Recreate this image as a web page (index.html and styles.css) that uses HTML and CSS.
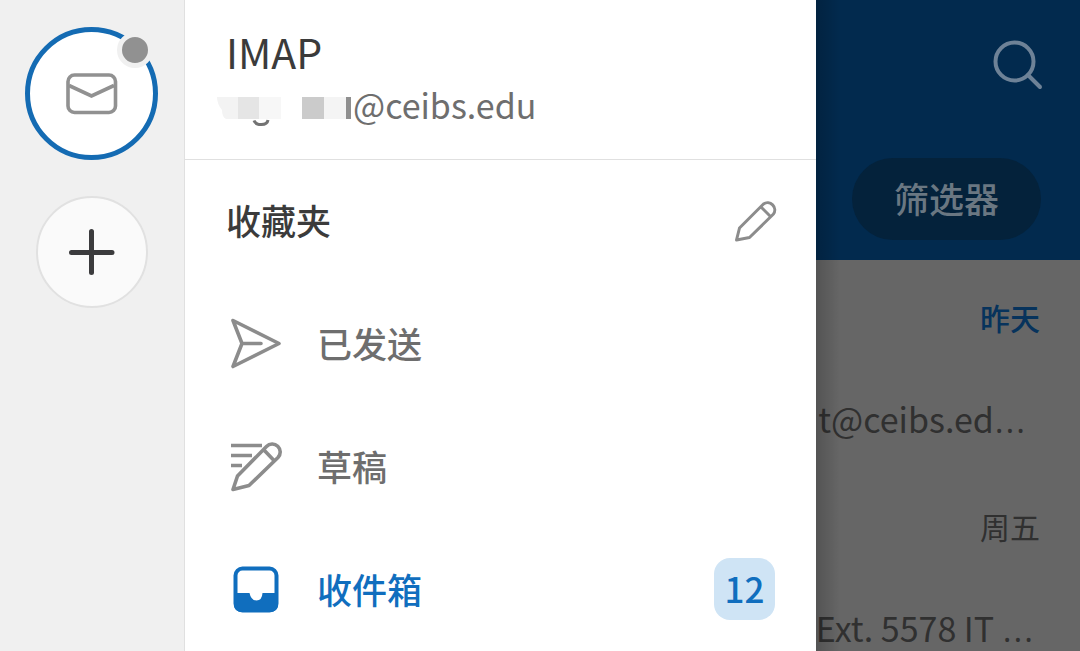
FILE: index.html
```html
<!DOCTYPE html>
<html lang="zh-CN">
<head>
<meta charset="utf-8">
<title>收件箱</title>
<meta name="viewport" content="width=device-width, initial-scale=1">
<link rel="stylesheet" href="styles.css">
</head>
<body class="app">
  <aside class="drawer">
    <nav class="rail" aria-label="帐户">
      <button class="account" type="button" aria-label="IMAP">
        <svg class="account-icon" viewBox="0 0 52 42" fill="none" stroke="#919191" stroke-width="3.6" stroke-linejoin="round">
          <rect x="2" y="2" width="47.500" height="37.500" rx="6.500"/>
          <path d="M3 12.500 25.500 23 48 12.500" stroke-linejoin="miter"/>
        </svg>
        <span class="account-badge"></span>
      </button>
      <button class="add" type="button" aria-label="添加帐户">
        <svg class="add-icon" viewBox="0 0 46 46" stroke="#3b3b3d" stroke-width="5" stroke-linecap="round"><path d="M22.500 2.500v41M2.500 23.500h40.500"/></svg>
      </button>
    </nav>
    <section class="panel">
      <header class="identity">
        <h1 class="identity-name">IMAP</h1>
        <p class="identity-mail">
          <svg class="mask" viewBox="0 0 136 44" aria-hidden="true">
            <g transform="translate(0 14)">
              <path d="M0 0h21v22H9Q5 20 5 13Q0 7 0 0Z" fill="#f3f3f3"/>
              <path d="M21 0h21v22H21z" fill="#e5e5e5"/>
              <path d="M42 0h22v22H42z" fill="#f7f7f7"/>
              <path d="M85 0h22v22H85z" fill="#cbcbcb"/>
              <path d="M107 0h22v22h-22z" fill="#f4f4f4"/>
              <path d="M129 0h5v22h-5z" fill="#8f8f8f"/>
              <path d="M37 23.500C39 29 50 29 51 23" fill="none" stroke="#737373" stroke-width="3"/>
            </g>
          </svg><span>@ceibs.edu</span>
        </p>
      </header>
      <div class="favorites">
        <h2 class="favorites-title">收藏夹</h2>
        <button class="edit" type="button" aria-label="编辑收藏夹">
          <svg class="edit-icon" viewBox="0 0 44 44" fill="none" stroke="#8c8c8c" stroke-width="3" stroke-linejoin="round">
            <path d="M3.500 42 6.500 30 30.500 6a7.200 7.200 0 0 1 10 10L16.500 39.500ZM28 9 38 19"/>
          </svg>
        </button>
      </div>
      <nav class="folders" aria-label="收藏夹">
        <a class="folder" href="#sent">
          <svg class="folder-icon" viewBox="0 0 54 54" fill="none" stroke="#8c8c8c" stroke-width="3.600" stroke-linejoin="round" stroke-linecap="round">
            <path d="M4 4.500 50 27.500 4 50.500 13 27.500ZM13 27.500H32"/>
          </svg>
          <span class="folder-name">已发送</span>
        </a>
        <a class="folder" href="#drafts">
          <svg class="folder-icon" viewBox="0 0 54 54" fill="none" stroke="#8c8c8c" stroke-width="3.600" stroke-linejoin="round">
            <path d="M4 50.500 8.500 37 37.500 7.500a7.600 7.600 0 0 1 11.500 11L20 46.500ZM34.500 10.500 45 21.500"/>
            <path d="M2 6.500h31M2 16.500h21M2 26.500h11"/>
          </svg>
          <span class="folder-name">草稿</span>
        </a>
        <a class="folder folder-active" href="#inbox" aria-current="page">
          <svg class="folder-icon" viewBox="0 0 54 54">
            <rect x="6.500" y="6.500" width="41" height="42" rx="7" fill="none" stroke="#106ebe" stroke-width="4"/>
            <path d="M5 31H20.500Q22 38.500 27.500 38.500T33.500 31H49V42Q49 50 41 50H13Q5 50 5 42Z" fill="#106ebe"/>
          </svg>
          <span class="folder-name">收件箱</span>
          <span class="count">12</span>
        </a>
      </nav>
    </section>
  </aside>
  <main class="inbox">
    <header class="toolbar">
      <button class="search" type="button" aria-label="搜索">
        <svg class="search-icon" viewBox="0 0 52 52" fill="none" stroke="#6e8297" stroke-width="4" stroke-linecap="round">
          <circle cx="22.500" cy="22.500" r="19"/><path d="M36 36 48 48"/>
        </svg>
      </button>
      <button class="filter" type="button">筛选器</button>
    </header>
    <article class="message">
      <time class="date date-unread">昨天</time>
      <p class="excerpt">t@ceibs.ed<span class="dots">…</span></p>
    </article>
    <article class="message">
      <time class="date">周五</time>
      <p class="excerpt excerpt-wide">Ext. 5578 IT <span class="dots">…</span></p>
    </article>
  </main>
</body>
</html>
```
FILE: styles.css
```css
* {
  box-sizing: border-box;
}

.app {
  display: flex;
  min-height: 100vh;
  margin: 0;
  overflow: hidden;
  background: #666;
  font-family: "Noto Sans CJK SC", "Noto Sans", sans-serif;
}

button {
  padding: 0;
  border: 0;
  background: none;
  font: inherit;
}

svg {
  display: block;
  flex: none;
}

h1,
h2,
p {
  margin: 0;
}

.drawer {
  display: flex;
  flex: 0 0 816px;
  background: #fff;
}

.rail {
  display: flex;
  flex: 0 0 185px;
  flex-direction: column;
  align-items: center;
  gap: 36px;
  padding: 27px 1px 0 0;
  border-right: 1px solid #e0e0e0;
  background: #f0f0f0;
}

.account {
  position: relative;
  display: grid;
  place-items: center;
  width: 133px;
  height: 133px;
  border: 5px solid #146bb3;
  border-radius: 50%;
  background: #fff;
}

.account-icon {
  width: 52px;
  height: 42px;
}

.account-badge {
  position: absolute;
  top: 0;
  right: 0;
  width: 36px;
  height: 36px;
  border: 5px solid #f0f0f0;
  border-radius: 50%;
  background: #919191;
}

.add {
  display: grid;
  place-items: center;
  width: 112px;
  height: 112px;
  border: 2px solid #e1e1e1;
  border-radius: 50%;
  background: #fafafa;
}

.add-icon {
  width: 46px;
  height: 46px;
}

.panel {
  flex: 1;
}

.identity {
  height: 160px;
  padding: 24px 32px 0;
  border-bottom: 1px solid #e0e0e0;
}

.identity-name {
  padding-left: 9px;
  color: #3b3b3b;
  font-size: 41px;
  font-weight: 400;
  line-height: 54px;
}

.identity-mail {
  display: flex;
  align-items: center;
  color: #6e6e6e;
  font-size: 34px;
  line-height: 54px;
}

.mask {
  width: 136px;
  height: 44px;
}

.favorites {
  display: flex;
  align-items: center;
  justify-content: space-between;
  height: 122px;
  padding: 0 39px 2px 41px;
}

.favorites-title {
  color: #3b3b3b;
  font-size: 35px;
  font-weight: 500;
  line-height: 52px;
}

.edit-icon {
  width: 44px;
  height: 44px;
}

.folder {
  display: flex;
  align-items: center;
  height: 123px;
  padding: 0 41px 2px 44px;
  color: #6e6e6e;
  font-size: 35px;
  font-weight: 500;
  line-height: 52px;
  text-decoration: none;
}

.folder-icon {
  width: 54px;
  height: 54px;
  margin-right: 34px;
}

.folder-active {
  color: #106ebe;
}

.count {
  width: 61px;
  height: 62px;
  margin-left: auto;
  border-radius: 16px;
  background: #cfe4f5;
  line-height: 60px;
  text-align: center;
}

.inbox {
  position: relative;
  flex: 1;
  min-width: 0;
  overflow: hidden;
}

.inbox::before {
  position: absolute;
  inset: 0 auto 0 0;
  width: 24px;
  background: linear-gradient(to right, rgba(0, 0, 0, 0.18), rgba(0, 0, 0, 0));
  content: "";
}

.toolbar {
  display: flex;
  flex-direction: column;
  align-items: flex-end;
  justify-content: space-between;
  height: 260px;
  padding: 39px 36px 20px;
  background: #022a4e;
}

.search-icon {
  width: 52px;
  height: 52px;
}

.filter {
  width: 189px;
  height: 82px;
  margin-right: 3px;
  padding-bottom: 3px;
  border-radius: 41px;
  background: #04223b;
  color: #6a7782;
  font-size: 35px;
  font-weight: 500;
}

.message {
  display: flex;
  flex-direction: column;
  align-items: flex-end;
  gap: 54px;
  height: 209px;
  padding: 35px 40px 0 0;
}

.date {
  color: #303030;
  font-size: 30px;
  line-height: 44px;
}

.date-unread {
  color: #07335c;
  font-weight: 500;
}

.excerpt {
  padding-right: 14px;
  color: #303030;
  font-size: 34px;
  line-height: 52px;
  white-space: nowrap;
}

.excerpt-wide {
  padding-right: 6px;
}

.dots {
  font-family: "Noto Sans", sans-serif;
  font-size: 44px;
  font-weight: 300;
  line-height: 1;
}
```
